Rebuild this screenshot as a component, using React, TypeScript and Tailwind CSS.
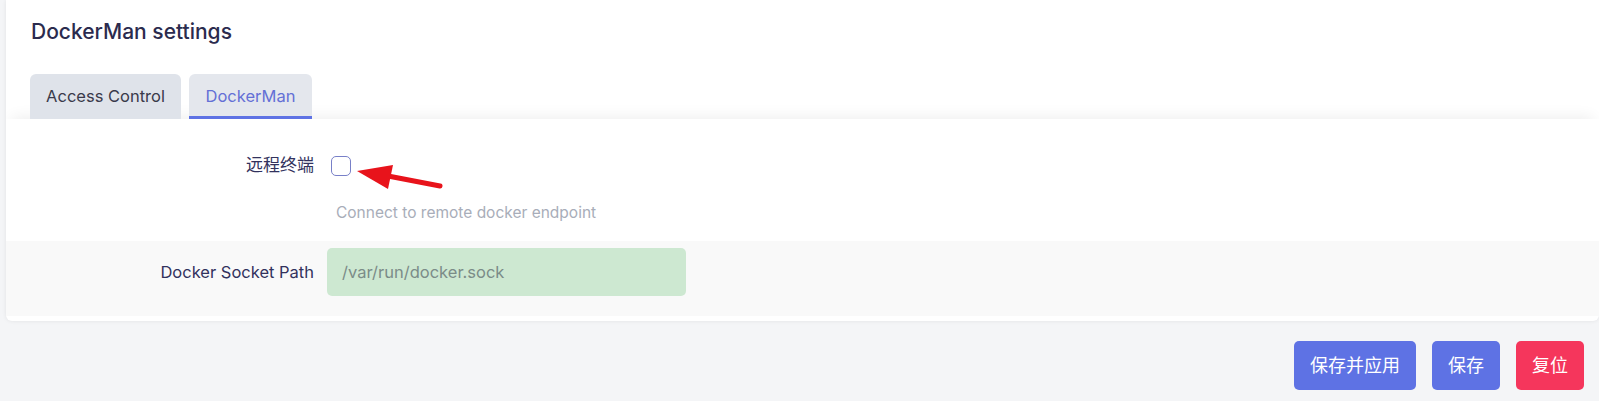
import React from 'react';

const font = { fontFamily: 'Inter, "Noto Sans CJK SC", sans-serif' };

function Arrow() {
  return (
    <svg className="absolute left-[350px] top-[158px]" width="100" height="36" viewBox="0 0 100 36">
      <line x1="90" y1="28" x2="38" y2="18" stroke="#e8131b" strokeWidth="5" strokeLinecap="round" />
      <polygon points="7,13 43,7 38,31" fill="#e8131b" />
    </svg>
  );
}

export default function App() {
  return (
    <div className="relative min-h-screen bg-[#f4f5f7] text-[#32325d]" style={font}>
      <div className="pl-[6px]">
        <div className="bg-white rounded-b-[6px] shadow-[0_0_4px_rgba(0,0,0,0.08)] pt-[18px] pb-[5px] overflow-hidden">
          <h2 className="px-[25px] text-[21px] leading-[28px] font-medium text-[#2b2b4e]">DockerMan settings</h2>
          <div className="mt-[28px] px-[24px] flex gap-[8px]">
            <div className="h-[45px] w-[151px] flex items-center justify-center rounded-t-[6px] bg-[#dfe3ea] text-[16.5px] text-[#3a3a4a]">
              Access Control
            </div>
            <div className="h-[45px] w-[123px] flex items-center justify-center rounded-t-[6px] bg-[#e4e7ed] text-[16.5px] text-[#6470d6] border-b-[3px] border-[#5e72e4] pt-[3px]">
              DockerMan
            </div>
          </div>
          <div className="bg-white shadow-[0_-8px_14px_-6px_rgba(0,0,0,0.07)]">
            <div className="h-[122px] pt-[34px]">
              <div className="flex items-center">
                <div className="w-[308px] text-right text-[17px]">远程终端</div>
                <div className="ml-[17px] w-[20px] h-[20px] rounded-[5px] border border-[#7880c8] bg-white" />
              </div>
              <div className="ml-[330px] mt-[22px] text-[15.5px] text-[#a8adb9]">Connect to remote docker endpoint</div>
            </div>
            <div className="bg-[#f9f9f9] pt-[7px] pb-[20px] flex items-center">
              <div className="w-[308px] text-right text-[16.5px]">Docker Socket Path</div>
              <div className="ml-[13px] w-[359px] h-[48px] rounded-[5px] bg-[#cde8d1] flex items-center pl-[15px] text-[16.5px] text-[#7b8c88]">
                /var/run/docker.sock
              </div>
            </div>
          </div>
        </div>
      </div>
      <div className="flex justify-end gap-[16px] pt-[20px] pr-[15px]">
        <button className="h-[49px] px-[16px] rounded-[5px] bg-[#5e72e4] text-white text-[18px]">保存并应用</button>
        <button className="h-[49px] px-[16px] rounded-[5px] bg-[#5e72e4] text-white text-[18px]">保存</button>
        <button className="h-[49px] px-[16px] rounded-[5px] bg-[#f5365c] text-white text-[18px]">复位</button>
      </div>
      <Arrow />
    </div>
  );
}
